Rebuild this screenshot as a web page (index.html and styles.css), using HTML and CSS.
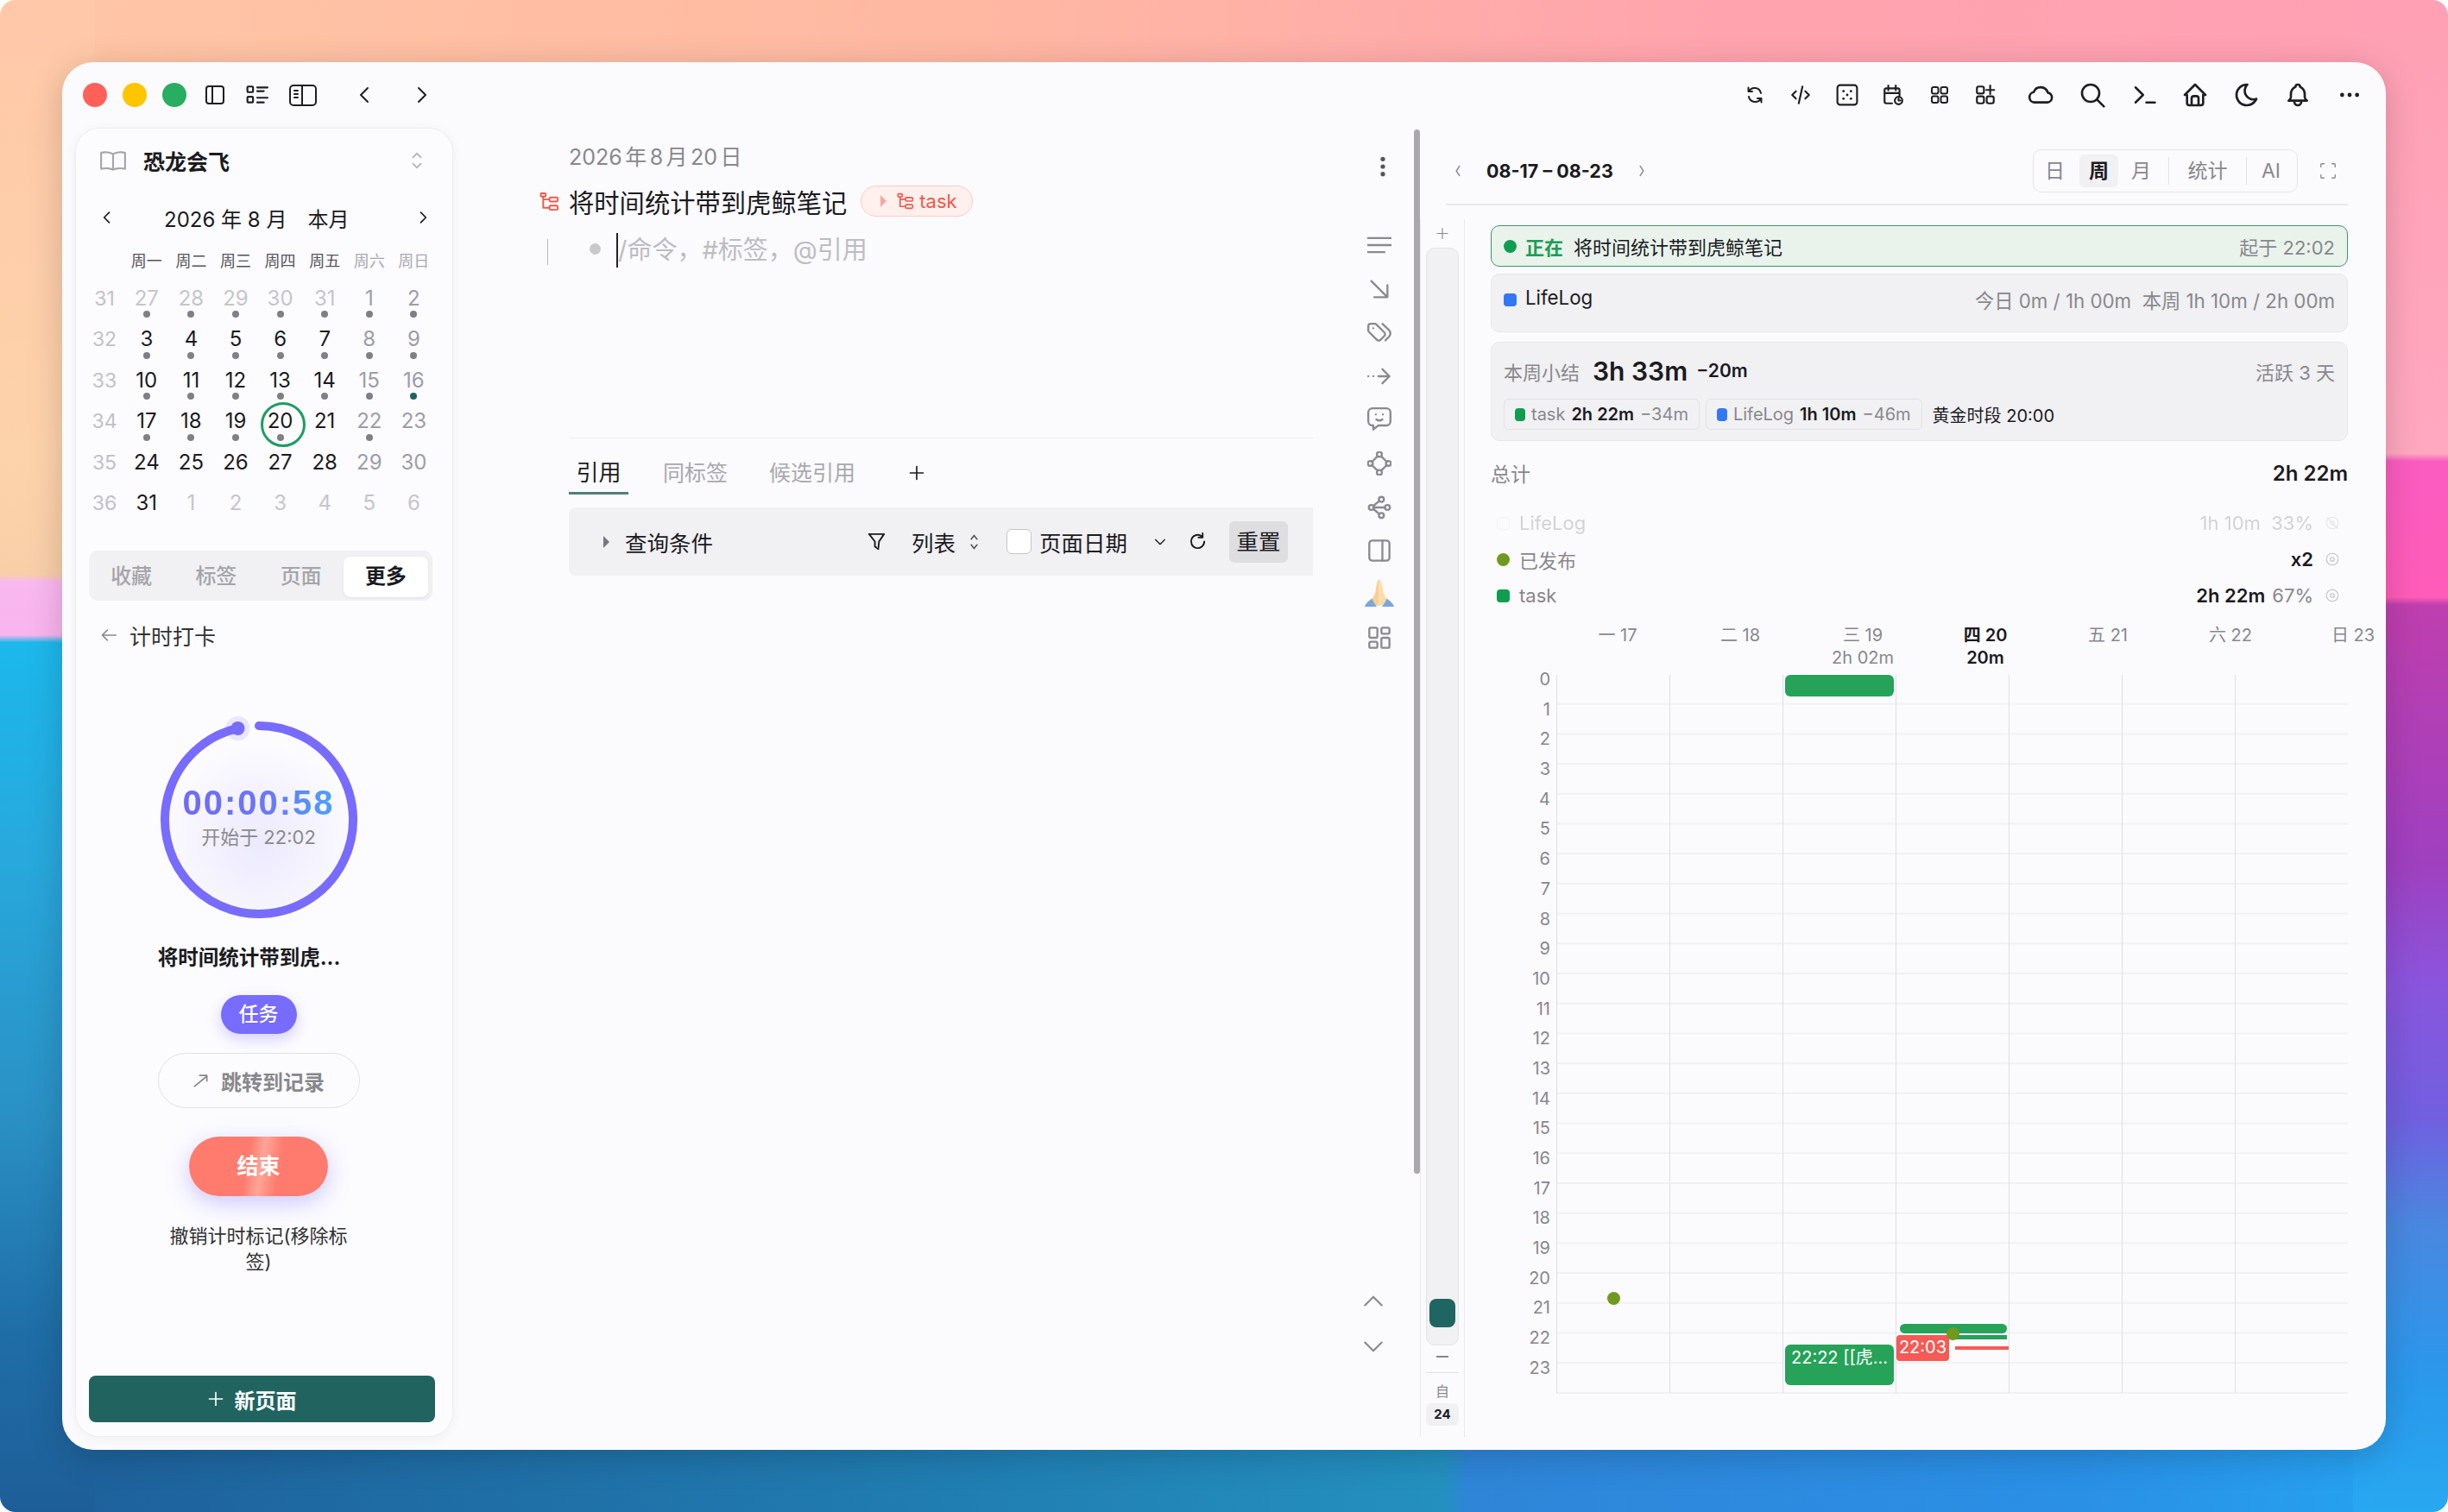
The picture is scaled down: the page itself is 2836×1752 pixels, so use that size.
FILE: index.html
```html
<!DOCTYPE html>
<html lang="zh-CN">
<head>
    <meta charset="UTF-8">
    <title>恐龙会飞</title>
    <link rel="stylesheet" href="styles.css">
</head>
<body>
<div class="window">
    <div class="titlebar">
        <div class="lights"><span class="light red"></span><span class="light yellow"></span><span class="light green"></span></div>
        <div class="left-icons">
            <svg class="ic s24" viewBox="0 0 24 24"><rect x="2" y="2" width="20" height="20" rx="3"/><path d="M9 2v20"/></svg>
            <svg class="ic s26" viewBox="0 0 24 24"><rect x="1.5" y="3" width="6" height="6" rx="1"/><rect x="1.5" y="14" width="6" height="6" rx="1"/><path d="M12 4h11M12 8h7M12 15h11M12 20h7"/></svg>
            <svg class="ic wide" viewBox="0 0 32 25"><rect x="1" y="1" width="30" height="23" rx="4"/><path d="M15 1v23M6 7h4M6 11h4M6 15h4"/></svg>
        </div>
        <div class="history">
            <svg class="ic s24" viewBox="0 0 24 24"><path d="M16 4l-8 8 8 8"/></svg>
            <svg class="ic s24" viewBox="0 0 24 24"><path d="M8 4l8 8-8 8"/></svg>
        </div>
        <div class="right-icons">
            <div class="icon-group first">
                <span class="slot"><svg class="ic s24" viewBox="0 0 24 24"><path d="M19 10a7.5 7.5 0 0 0-14-2M4.5 3.5V8H9"/><path d="M5 14a7.5 7.5 0 0 0 14 2M19.5 20.5V16H15"/></svg></span>
                <span class="slot"><svg class="ic s26" viewBox="0 0 24 24"><path d="M7 8l-4 4 4 4M17 8l4 4-4 4M14 3l-4 18"/></svg></span>
                <span class="slot"><svg class="ic s26" viewBox="0 0 24 24"><rect x="1.5" y="1.5" width="21" height="21" rx="3"/><g class="solid"><circle cx="8" cy="8" r="1.3"/><circle cx="16" cy="8" r="1.3"/><circle cx="12" cy="12" r="1.3"/><circle cx="8" cy="16" r="1.3"/><circle cx="16" cy="16" r="1.3"/></g></svg></span>
                <span class="slot"><svg class="ic s26" viewBox="0 0 24 24"><path d="M11 21H5a2 2 0 0 1-2-2V7a2 2 0 0 1 2-2h12a2 2 0 0 1 2 2v6M15 2v5M7 2v5M3 10h16"/><circle cx="18" cy="18" r="4"/><path d="M18 16v2h2"/></svg></span>
                <span class="slot"><svg class="ic s24" viewBox="0 0 24 24"><rect x="3" y="3" width="7.5" height="7.5" rx="2"/><rect x="13.5" y="3" width="7.5" height="7.5" rx="2"/><rect x="3" y="13.5" width="7.5" height="7.5" rx="2"/><rect x="13.5" y="13.5" width="7.5" height="7.5" rx="2"/></svg></span>
                <span class="slot"><svg class="ic s26" viewBox="0 0 24 24"><rect x="3" y="3" width="7.5" height="7.5" rx="2"/><rect x="3" y="13.5" width="7.5" height="7.5" rx="2"/><rect x="13.5" y="13.5" width="7.5" height="7.5" rx="2"/><path d="M17.2 2v9M13 6.7h8.5"/></svg></span>
            </div>
            <div class="icon-group second">
                <span class="slot"><svg class="ic s32" viewBox="0 0 24 24"><path d="M6.5 18.5a4.5 4.5 0 0 1-.5-8.9A6.5 6.5 0 0 1 18.3 10a4.3 4.3 0 0 1-.3 8.5z"/></svg></span>
                <span class="slot"><svg class="ic s32" viewBox="0 0 24 24"><circle cx="10.5" cy="10.5" r="7.5"/><path d="M16 16l6 6"/></svg></span>
                <span class="slot"><svg class="ic s30" viewBox="0 0 24 24"><path d="M4 5l7 7-7 7M14 19h8"/></svg></span>
                <span class="slot"><svg class="ic s32" viewBox="0 0 24 24"><path d="M5 12H3l9-9 9 9h-2M5 12v7a2 2 0 0 0 2 2h10a2 2 0 0 0 2-2v-7M9 21v-6a2 2 0 0 1 2-2h2a2 2 0 0 1 2 2v6"/></svg></span>
                <span class="slot"><svg class="ic s32" viewBox="0 0 24 24"><path d="M12 3h.4a7.5 7.5 0 0 0 7.9 12.4A9 9 0 1 1 12 3z"/></svg></span>
                <span class="slot"><svg class="ic s32" viewBox="0 0 24 24"><path d="M10 5a2 2 0 1 1 4 0 7 7 0 0 1 4 6v3a4 4 0 0 0 2 3H4a4 4 0 0 0 2-3v-3a7 7 0 0 1 4-6M9 17v1a3 3 0 0 0 6 0v-1"/></svg></span>
                <span class="slot"><svg class="s26 solid" viewBox="0 0 24 24"><circle cx="4" cy="12" r="2.2"/><circle cx="12" cy="12" r="2.2"/><circle cx="20" cy="12" r="2.2"/></svg></span>
            </div>
        </div>
    </div>

    <div class="layout">
        <aside class="sidebar">
            <div class="space-head">
                <svg class="ic book" viewBox="0 0 30 24"><path d="M15 5C12 3 6 2.5 2 3.5V21c4-1 10-.5 13 1 3-1.5 9-2 13-1V3.5C24 2.5 18 3 15 5zM15 5v17"/></svg>
                <span class="space-name">恐龙会飞</span>
                <svg class="ic updown" viewBox="0 0 14 24"><path d="M2 8l5-5 5 5M2 16l5 5 5-5"/></svg>
            </div>
            <div class="cal-head">
                <svg class="ic s20" viewBox="0 0 24 24"><path d="M15 5l-7 7 7 7"/></svg>
                <div class="cal-title"><span>2026 年 8 月</span><span>本月</span></div>
                <svg class="ic s20" viewBox="0 0 24 24"><path d="M9 5l7 7-7 7"/></svg>
            </div>
            <div class="week-row">
                <span></span><span>周一</span><span>周二</span><span>周三</span><span>周四</span><span>周五</span><span class="off">周六</span><span class="off">周日</span>
            </div>
            <div class="cal-grid">
                <span class="wk">31</span><span class="out dot">27</span><span class="out dot">28</span><span class="out dot">29</span><span class="out dot">30</span><span class="out dot">31</span><span class="rest dot">1</span><span class="rest dot">2</span>
                <span class="wk">32</span><span class="dot">3</span><span class="dot">4</span><span class="dot">5</span><span class="dot">6</span><span class="dot">7</span><span class="rest dot">8</span><span class="rest dot">9</span>
                <span class="wk">33</span><span class="dot">10</span><span class="dot">11</span><span class="dot">12</span><span class="dot">13</span><span class="dot">14</span><span class="rest dot">15</span><span class="rest dot teal">16</span>
                <span class="wk">34</span><span class="dot">17</span><span class="dot">18</span><span class="dot">19</span><span class="dot today">20</span><span>21</span><span class="rest dot">22</span><span class="rest">23</span>
                <span class="wk">35</span><span>24</span><span>25</span><span>26</span><span>27</span><span>28</span><span class="rest">29</span><span class="rest">30</span>
                <span class="wk">36</span><span>31</span><span class="out">1</span><span class="out">2</span><span class="out">3</span><span class="out">4</span><span class="out">5</span><span class="out">6</span>
            </div>
            <div class="segment">
                <span>收藏</span><span>标签</span><span>页面</span><span class="active">更多</span>
            </div>
            <div class="back-row">
                <svg class="ic s20 gray" viewBox="0 0 24 24"><path d="M22 12H3M10 5l-7 7 7 7"/></svg>
                <span>计时打卡</span>
            </div>
            <div class="timer">
                <div class="ring">
                    <svg class="ring-svg" viewBox="0 0 228 228">
                        <path class="ring-arc" d="M114 5A109 109 0 1 1 89.5 7.8"/>
                        <circle class="ring-halo" cx="89.5" cy="8" r="14"/>
                        <circle class="ring-dot" cx="89.5" cy="8" r="8"/>
                    </svg>
                    <div class="clock">00:00:58</div>
                    <div class="started">开始于 22:02</div>
                </div>
                <div class="timer-title">将时间统计带到虎...</div>
                <div class="pill">任务</div>
                <div class="jump"><svg class="ic s20" viewBox="0 0 24 24"><path d="M3 20L20 6M10 5h10v8"/></svg><span>跳转到记录</span></div>
                <div class="stop">结束</div>
                <div class="undo">撤销计时标记(移除标签)</div>
            </div>
            <div class="new-page"><svg class="ic s20" viewBox="0 0 24 24"><path d="M12 3v18M3 12h18"/></svg><span>新页面</span></div>
        </aside>

        <main class="doc-area">
            <div class="doc">
                <div class="doc-date">2026 年 8 月 20 日</div>
                <div class="doc-title">
                    <svg class="ic tree" viewBox="0 0 24 24"><rect x="1.5" y="2" width="6" height="4" rx="1"/><rect x="12" y="7" width="10" height="5" rx="1.5"/><rect x="12" y="17" width="10" height="5" rx="1.5"/><path d="M4.5 6v13.5H12M4.5 9.5H12"/></svg>
                    <span>将时间统计带到虎鲸笔记</span>
                    <span class="tag"><i class="tri"></i><svg class="ic tag-tree" viewBox="0 0 24 24"><rect x="1.5" y="2" width="6" height="4" rx="1"/><rect x="12" y="7" width="10" height="5" rx="1.5"/><rect x="12" y="17" width="10" height="5" rx="1.5"/><path d="M4.5 6v13.5H12M4.5 9.5H12"/></svg>task</span>
                </div>
                <div class="editor-line">
                    <i class="guide"></i><i class="bullet"></i>
                    <span class="placeholder">/命令，#标签，@引用</span>
                </div>
                <div class="doc-rule"></div>
                <div class="doc-tabs">
                    <span class="current">引用</span><span>同标签</span><span>候选引用</span>
                    <svg class="ic plus" viewBox="0 0 24 24"><path d="M12 3v18M3 12h18"/></svg>
                </div>
                <div class="query">
                    <i class="tri dark"></i>
                    <span class="query-name">查询条件</span>
                    <svg class="ic funnel" viewBox="0 0 24 24"><path d="M3 3h18l-6 9-1 9-4-3v-6z"/></svg>
                    <span class="query-list">列表</span>
                    <svg class="ic updown small" viewBox="0 0 14 24"><path d="M3 8l4-5 4 5M3 16l4 5 4-5"/></svg>
                    <i class="check"></i>
                    <span>页面日期</span>
                    <svg class="ic caret" viewBox="0 0 24 24"><path d="M4 8l8 8 8-8"/></svg>
                    <svg class="ic redo" viewBox="0 0 24 24"><path d="M20 12a8 8 0 1 1-3-6.3M18 2v5h-5"/></svg>
                    <span class="reset">重置</span>
                </div>
            </div>
            <div class="tools">
                <svg class="solid more" viewBox="0 0 24 24"><circle cx="12" cy="4" r="2.4"/><circle cx="12" cy="12" r="2.4"/><circle cx="12" cy="20" r="2.4"/></svg>
                <div class="tool-list">
                    <svg class="ic tool" viewBox="0 0 24 24"><path d="M0 5h24M0 12h24M0 19h17"/></svg>
                    <svg class="ic tool" viewBox="0 0 24 24"><path d="M4 4l16 16M20 8v12H7"/></svg>
                    <svg class="ic tool" viewBox="0 0 24 24"><path d="M1 6v4.2a2 2 0 0 0 .6 1.4l8 8a2.4 2.4 0 0 0 3.4 0l4-4a2.4 2.4 0 0 0 0-3.4l-8-8A2 2 0 0 0 7.2 3.6H3.4A2.4 2.4 0 0 0 1 6zM18 20l3.5-3.5a4.8 4.8 0 0 0 0-6.8L15 3.6M6 8h.01"/></svg>
                    <svg class="ic tool" viewBox="0 0 24 24"><path d="M1 12h.01M6 12h.01M11 12h11M15 5l7 7-7 7"/></svg>
                    <svg class="ic tool" viewBox="0 0 24 24"><path d="M5 1h14a4 4 0 0 1 4 4v9a4 4 0 0 1-4 4h-8l-5 4v-4H5a4 4 0 0 1-4-4V5a4 4 0 0 1 4-4zM8.5 7v.01M15.5 7v.01M9 12c2 1.5 4 1.5 6 0"/></svg>
                    <svg class="ic tool" viewBox="0 0 24 24"><circle cx="12" cy="3" r="2.5"/><circle cx="12" cy="21" r="2.5"/><circle cx="3" cy="12" r="2.5"/><circle cx="21" cy="12" r="2.5"/><path d="M10 5l-5.5 5.5M14 5l5.5 5.5M10 19l-5.5-5.5M14 19l5.5-5.5"/></svg>
                    <svg class="ic tool" viewBox="0 0 24 24"><circle cx="14" cy="4" r="2.5"/><circle cx="14" cy="20" r="2.5"/><circle cx="4" cy="12" r="2.5"/><circle cx="20" cy="12" r="2.5"/><path d="M6 10.5l6-5M6 13.5l6 5M6.5 12h11"/></svg>
                    <svg class="ic tool" viewBox="0 0 24 24"><rect x="2" y="2" width="20" height="20" rx="3"/><path d="M15 2v20"/></svg>
                    <svg class="tool hands" viewBox="0 0 34 32"><path fill="#f8cf8e" d="M16.7 0c-2 2-3.2 7-3.7 12-.5 5-2.500 9-5.500 12l4 6 5.200 1z"/><path fill="#fbdca4" d="M17.300 0c2 2 3.200 7 3.700 12 .5 5 2.500 9 5.500 12l-4 6-5.200 1z"/><path fill="#7aa6dd" d="M0 32c1-4 5-7 8.500-9.500 1 3.500 3.500 6.500 5.500 9.500zM34 32c-1-4-5-7-8.500-9.500-1 3.500-3.500 6.500-5.500 9.500z"/></svg>
                    <svg class="ic tool" viewBox="0 0 24 24"><rect x="2" y="2" width="8" height="10" rx="1.5"/><rect x="14" y="2" width="8" height="6" rx="1.5"/><rect x="2" y="16" width="8" height="6" rx="1.5"/><rect x="14" y="12" width="8" height="10" rx="1.5"/></svg>
                </div>
                <div class="tool-nav">
                    <svg class="ic s26 gray" viewBox="0 0 24 24"><path d="M3 17l9-9 9 9"/></svg>
                    <svg class="ic s26 gray" viewBox="0 0 24 24"><path d="M3 7l9 9 9-9"/></svg>
                </div>
            </div>
        </main>

        <div class="scrollbar"></div>

        <section class="panel">
            <div class="panel-head">
                <svg class="ic range-nav" viewBox="0 0 12 24"><path d="M8 6l-4 6 4 6"/></svg>
                <span class="range">08-17 – 08-23</span>
                <svg class="ic range-nav" viewBox="0 0 12 24"><path d="M4 6l4 6-4 6"/></svg>
                <div class="views">
                    <span>日</span><span class="on">周</span><span>月</span><i></i><span class="wide-view">统计</span><i></i><span class="ai">AI</span>
                </div>
                <svg class="ic full" viewBox="0 0 24 24"><path d="M7 3H4a1 1 0 0 0-1 1v3M17 3h3a1 1 0 0 1 1 1v3M7 21H4a1 1 0 0 1-1-1v-3M17 21h3a1 1 0 0 0 1-1v-3"/></svg>
            </div>
            <div class="panel-body">
                <div class="rail">
                    <svg class="ic rail-plus" viewBox="0 0 24 24"><path d="M12 4v16M4 12h16"/></svg>
                    <div class="track"><div class="thumb"></div></div>
                    <i class="rail-minus"></i>
                    <i class="rail-rule"></i>
                    <span class="rail-auto">自</span>
                    <span class="rail-hours">24</span>
                </div>
                <div class="stats">
                    <div class="card running">
                        <i class="mark round green-mark"></i><b class="now">正在</b><span>将时间统计带到虎鲸笔记</span><em>起于 22:02</em>
                    </div>
                    <div class="card goal">
                        <i class="mark blue-mark"></i><span>LifeLog</span><em>今日 0m / 1h 00m&nbsp; 本周 1h 10m / 2h 00m</em>
                    </div>
                    <div class="card summary">
                        <div class="sum-top">
                            <span class="sum-label">本周小结</span><b class="sum-total">3h 33m</b><b class="sum-diff">−20m</b><em>活跃 3 天</em>
                        </div>
                        <div class="sum-chips">
                            <span class="chip"><i class="mark green-mark"></i><u>task</u><b>2h 22m</b><u>−34m</u></span>
                            <span class="chip"><i class="mark blue-mark"></i><u>LifeLog</u><b>1h 10m</b><u>−46m</u></span>
                            <span class="golden">黄金时段 20:00</span>
                        </div>
                    </div>
                    <div class="total"><span>总计</span><b>2h 22m</b></div>
                    <div class="legend faded">
                        <i class="mark hollow"></i><span>LifeLog</span><em>1h 10m&nbsp; 33%</em>
                        <svg class="ic eye" viewBox="0 0 24 24"><circle cx="12" cy="12" r="9"/><circle cx="12" cy="12" r="3"/><path d="M4 4l16 16"/></svg>
                    </div>
                    <div class="legend">
                        <i class="mark round olive-mark"></i><span>已发布</span><b>x2</b>
                        <svg class="ic eye" viewBox="0 0 24 24"><circle cx="12" cy="12" r="9"/><circle cx="12" cy="12" r="3"/></svg>
                    </div>
                    <div class="legend">
                        <i class="mark green-mark"></i><span>task</span><b>2h 22m</b><em class="pct">67%</em>
                        <svg class="ic eye" viewBox="0 0 24 24"><circle cx="12" cy="12" r="9"/><circle cx="12" cy="12" r="3"/></svg>
                    </div>
                    <div class="days">
                        <div>一 17</div><div>二 18</div><div>三 19<br>2h 02m</div><div class="this-day">四 20<br>20m</div><div>五 21</div><div>六 22</div><div>日 23</div>
                    </div>
                    <div class="chart">
                        <div class="hours">
                            <span>0</span><span>1</span><span>2</span><span>3</span><span>4</span><span>5</span><span>6</span><span>7</span><span>8</span><span>9</span><span>10</span><span>11</span><span>12</span><span>13</span><span>14</span><span>15</span><span>16</span><span>17</span><span>18</span><span>19</span><span>20</span><span>21</span><span>22</span><span>23</span>
                        </div>
                        <div class="grid">
                            <div class="col"><i class="event-dot mon-dot"></i></div>
                            <div class="col"></div>
                            <div class="col">
                                <div class="event wed-night"></div>
                                <div class="event wed-late">22:22 [[虎...</div>
                            </div>
                            <div class="col">
                                <div class="event thu-a"></div>
                                <div class="event thu-b"></div>
                                <div class="event thu-now">22:03</div>
                                <i class="now-line"></i>
                                <i class="event-dot thu-dot"></i>
                            </div>
                            <div class="col"></div>
                            <div class="col"></div>
                            <div class="col"></div>
                        </div>
                    </div>
                </div>
            </div>
        </section>
    </div>
</div>
</body>
</html>
```

FILE: styles.css
```css
* {
    box-sizing: border-box;
}

html {
    background-color: #fff;
}

html, body {
    margin: 0;
    height: 1752px;
    overflow: hidden;
}

/* wallpaper: only the strips round the window are seen */
body {
    padding: 72px;
    font-family: Inter, "Noto Sans CJK SC", sans-serif;
    color: #1b1b1f;
    border-radius: 18px;
    background-color: #2a86d6;
    background-image:
        linear-gradient(180deg, #ffc8a8 0%, #fdd3ab 30%, #f8cfa8 38%, #f9b8f0 38.5%, #f8b4ee 42%, #1cb8ec 42.5%, #28a8dc 57%, #2a90c4 74%, #1f6ea8 88%, #1e5e98 100%),
        linear-gradient(180deg, #ffa0b4 0%, #ffa8c0 30%, #fb5cc0 30.5%, #ff5cb8 39.5%, #bf3fae 40%, #a040c0 57%, #8a55dc 65%, #7060e0 74%, #4a88e0 81%, #2a98ec 91%, #28a8f0 100%),
        linear-gradient(90deg, #ffc6a6 0%, #ffb8a2 40%, #ffa4ae 70%, #ffa0b4 100%),
        linear-gradient(90deg, #1e5f9a 0%, #207aaf 35%, #2490c0 59%, #2f85d8 60%, #2a90e6 85%, #25a5f2 100%);
    background-size: 110px 100%, 110px 100%, 100% 110px, 100% 110px;
    background-position: left, right, top, bottom;
    background-repeat: no-repeat;
}

i, em {
    font-style: normal;
}

u {
    text-decoration: none;
}

.ic {
    fill: none;
    stroke: currentColor;
    stroke-width: 2;
    stroke-linecap: round;
    stroke-linejoin: round;
    flex: none;
}

.solid {
    fill: currentColor;
    stroke: none;
}

.s20 { width: 20px; height: 20px; }
.s24 { width: 24px; height: 24px; }
.s26 { width: 26px; height: 26px; }
.s30 { width: 30px; height: 30px; }
.s32 { width: 32px; height: 32px; }
.gray { color: #8a8a8f; }

.window {
    width: 2692px;
    height: 1608px;
    border-radius: 36px;
    background-color: #fbfafd;
    overflow: hidden;
    display: flex;
    flex-direction: column;
    box-shadow: 0 8px 40px rgba(0,0,0,0.18);
}

/* title bar */
.titlebar {
    height: 76px;
    flex: none;
    display: flex;
    align-items: center;
    padding: 0 22px 0 24px;
    color: #1f1f23;
}

.lights {
    display: flex;
    gap: 18px;
}

.light {
    width: 28px;
    height: 28px;
    border-radius: 50%;
}

.red { background-color: #ff6159; }
.yellow { background-color: #ffc500; }
.green { background-color: #27ae60; }

.left-icons {
    display: flex;
    align-items: center;
    gap: 24px;
    margin-left: 21px;
}

.wide {
    width: 32px;
    height: 25px;
}

.history {
    display: flex;
    gap: 43px;
    margin-left: 43px;
}

.right-icons {
    margin-left: auto;
    display: flex;
    gap: 24px;
}

.icon-group {
    display: flex;
}

.icon-group.first { gap: 13.5px; }
.icon-group.second { gap: 19.6px; }

.slot {
    width: 40px;
    height: 40px;
    display: flex;
    align-items: center;
    justify-content: center;
}

.layout {
    flex: 1;
    min-height: 0;
    display: flex;
}

/* left card */
.sidebar {
    width: 438px;
    height: 1517px;
    margin-left: 15px;
    flex: none;
    display: flex;
    flex-direction: column;
    border-radius: 28px;
    background-color: #fcfbfe;
    border: 1px solid #eeedf0;
    box-shadow: 0 2px 14px rgba(0,0,0,0.05);
}

.space-head {
    height: 73px;
    flex: none;
    display: flex;
    align-items: center;
    padding: 0 34px 0 27px;
}

.book {
    width: 32px;
    height: 26px;
    color: #a5a5aa;
}

.space-name {
    margin-left: 19px;
    font-size: 25px;
    font-weight: 700;
}

.updown {
    width: 14px;
    height: 22px;
    margin-left: auto;
    color: #b5b5ba;
}

.cal-head {
    height: 62px;
    flex: none;
    display: flex;
    align-items: center;
    padding: 0 24px 2px 26px;
    color: #1b1b1f;
}

.cal-title {
    display: flex;
    gap: 24px;
    margin-left: 56px;
    margin-right: auto;
    font-size: 24px;
    white-space: nowrap;
}

.week-row, .cal-grid {
    display: grid;
    grid-template-columns: 46px repeat(7, 51.6px);
    margin-left: 10px;
    text-align: center;
}

.week-row {
    height: 34px;
    margin-top: 2px;
    line-height: 34px;
    font-size: 18px;
    color: #55555a;
}

.week-row .off {
    color: #a9a9b2;
}

.cal-grid {
    margin-top: 4px;
    grid-auto-rows: 47.4px;
    font-size: 24px;
    line-height: 47.4px;
}

.cal-grid span {
    position: relative;
    line-height: 44px;
}

.cal-grid .wk { color: #c2c2c6; font-size: 23px; }
.cal-grid .out { color: #c6c6ca; }
.cal-grid .rest { color: #9d9da8; }

.cal-grid .dot::after {
    content: "";
    position: absolute;
    left: 50%;
    bottom: 3px;
    width: 8px;
    height: 8px;
    margin-left: -4px;
    border-radius: 50%;
    background-color: #7f7f85;
}

.cal-grid .teal::after {
    background-color: #21645f;
}

.cal-grid .today::before {
    content: "";
    position: absolute;
    left: 50%;
    top: 0;
    width: 46px;
    height: 46px;
    margin-left: -23px;
    border: 3px solid #1f9d63;
    border-radius: 50%;
}

.segment {
    margin: 30px 23px 0 15px;
    height: 58px;
    flex: none;
    display: grid;
    grid-template-columns: repeat(4, 1fr);
    padding: 7px 5px 4px 0;
    background-color: #f1f0f3;
    border-radius: 10px;
    font-size: 24px;
    font-weight: 500;
    color: #a5a5aa;
    text-align: center;
}

.segment span {
    line-height: 46px;
}

.segment .active {
    background-color: #fff;
    color: #1b1b1f;
    border-radius: 8px;
    font-weight: 700;
    box-shadow: 0 1px 3px rgba(0,0,0,0.08);
}

.back-row {
    height: 80px;
    flex: none;
    display: flex;
    align-items: center;
    gap: 14px;
    padding-left: 28px;
    font-size: 25px;
    color: #333;
}

.timer {
    width: 423px;
    margin-top: 60px;
    display: flex;
    flex-direction: column;
    align-items: center;
}

.ring {
    position: relative;
    width: 228px;
    height: 228px;
    padding-top: 69px;
    border-radius: 50%;
    text-align: center;
    background: radial-gradient(circle at 50% 62%, rgba(118,108,255,0.12), rgba(118,108,255,0) 65%);
}

.ring-svg {
    position: absolute;
    left: 0;
    top: 0;
    width: 228px;
    height: 228px;
    overflow: visible;
}

.ring-arc {
    fill: none;
    stroke: #776cff;
    stroke-width: 10;
    stroke-linecap: round;
}

.ring-dot { fill: #776cff; }
.ring-halo { fill: rgba(118,108,255,0.14); }

.clock {
    font-family: "Liberation Sans", sans-serif;
    font-size: 40px;
    line-height: 50px;
    font-weight: 700;
    letter-spacing: 2px;
    color: transparent;
    background: linear-gradient(90deg, #6f67f5 0%, #6a78f6 55%, #3fb0f7 100%);
    -webkit-background-clip: text;
    background-clip: text;
}

.started {
    font-size: 22px;
    line-height: 30px;
    color: #8a8a8e;
}

.timer-title {
    margin: 29px 22px 0 0;
    font-size: 23.5px;
    line-height: 34px;
    font-weight: 700;
    white-space: nowrap;
}

.pill {
    margin-top: 26px;
    width: 88px;
    height: 45px;
    line-height: 45px;
    text-align: center;
    border-radius: 23px;
    background-color: #776cff;
    color: #fff;
    font-size: 23px;
    font-weight: 500;
    box-shadow: 0 6px 16px rgba(118,108,255,0.3);
}

.jump {
    margin-top: 22px;
    width: 234px;
    height: 64px;
    display: flex;
    align-items: center;
    justify-content: center;
    gap: 13px;
    border: 1px solid #e2e1e5;
    border-radius: 32px;
    color: #88888c;
    font-size: 24px;
    font-weight: 700;
}

.stop {
    margin-top: 33px;
    width: 161px;
    height: 69px;
    line-height: 69px;
    text-align: center;
    border-radius: 35px;
    color: #fff;
    font-size: 25px;
    font-weight: 700;
    background: linear-gradient(100deg, #ff7b6e 0%, #ff7b6e 42%, #ffa598 52%, #ff7b6e 64%, #ff7b6e 100%);
    box-shadow: 0 8px 26px rgba(118,108,255,0.35);
}

.undo {
    margin-top: 31px;
    width: 214px;
    text-align: center;
    font-size: 22px;
    line-height: 30px;
    color: #333;
}

.new-page {
    margin: auto 20px 16px 15px;
    height: 54px;
    flex: none;
    display: flex;
    align-items: center;
    justify-content: center;
    gap: 12px;
    padding-right: 24px;
    border-radius: 8px;
    background-color: #21645f;
    color: #fff;
    font-size: 24px;
    font-weight: 700;
}

/* document */
.doc-area {
    width: 1113px;
    flex: none;
    display: flex;
}

.doc {
    width: 996px;
    padding-left: 134px;
    flex: none;
}

.doc-date {
    margin-top: 18px;
    height: 32px;
    line-height: 32px;
    font-size: 25px;
    word-spacing: -3.6px;
    color: #88888c;
}

.doc-title {
    position: relative;
    margin-top: 17px;
    height: 36px;
    display: flex;
    align-items: center;
    font-size: 29.3px;
    white-space: nowrap;
}

.tree {
    position: absolute;
    left: -34px;
    top: 7px;
    width: 23px;
    height: 23px;
    color: #ef5a4a;
}

.tag {
    margin-left: 16px;
    height: 36px;
    width: 130px;
    display: flex;
    align-items: center;
    padding-left: 22px;
    border: 1px solid #ffcbc4;
    border-radius: 18px;
    background-color: #ffefed;
    color: #ef5a4a;
    font-size: 22px;
}

.tri {
    width: 0;
    height: 0;
    border-left: 7px solid #f5aaa1;
    border-top: 7px solid transparent;
    border-bottom: 7px solid transparent;
}

.tag-tree {
    width: 20px;
    height: 20px;
    margin: 0 6px 0 12px;
}

.editor-line {
    position: relative;
    height: 44px;
    margin-top: 17px;
    padding-left: 55px;
    line-height: 44px;
    font-size: 29px;
    color: #bdbdc1;
}

.placeholder {
    border-left: 2px solid #222;
    display: inline-block;
    height: 40px;
    line-height: 40px;
    white-space: nowrap;
}

.guide {
    position: absolute;
    left: -25px;
    top: 9px;
    width: 1px;
    height: 30px;
    background-color: #b9b9bd;
}

.bullet {
    position: absolute;
    left: 24px;
    top: 14px;
    width: 13px;
    height: 13px;
    border-radius: 50%;
    background-color: #c9c9cc;
}

.doc-rule {
    margin-top: 195px;
    height: 1px;
    border-top: 1px solid #ececef;
}

.doc-tabs {
    height: 65px;
    padding-top: 18px;
    display: flex;
    align-items: flex-start;
    gap: 48px;
    font-size: 25px;
    line-height: 44px;
    color: #a9a9ad;
}

.doc-tabs .current {
    width: 69px;
    height: 47px;
    text-align: center;
    margin-right: -8px;
    color: #1b1b1f;
    font-size: 26px;
    border-bottom: 3px solid #4f7f76;
}

.plus {
    width: 20px;
    height: 20px;
    margin: 12px 0 0 13px;
    color: #1b1b1f;
}

.query {
    margin-top: 15px;
    height: 79px;
    display: flex;
    align-items: center;
    padding: 0 29px 0 40px;
    background-color: #f1f0f3;
    border-radius: 8px 0 0 8px;
    font-size: 25.5px;
    color: #1b1b1f;
}

.tri.dark {
    border-left-color: #77777c;
}

.query-name {
    margin-left: 18px;
}

.funnel {
    width: 23px;
    height: 23px;
    margin-left: auto;
}

.query-list {
    margin-left: 29px;
}

.updown.small {
    width: 13px;
    height: 20px;
    margin-left: 15px;
    color: #55555a;
}

.check {
    width: 29px;
    height: 29px;
    margin: 0 9px 0 31px;
    border: 1px solid #c5c5c9;
    border-radius: 6px;
    background-color: #fff;
}

.caret {
    width: 16px;
    height: 16px;
    margin-left: 30px;
}

.redo {
    width: 23px;
    height: 23px;
    margin-left: 24px;
}

.reset {
    width: 68px;
    height: 48px;
    line-height: 48px;
    margin-left: 25px;
    text-align: center;
    border-radius: 6px;
    background-color: #dedde0;
}

.tools {
    width: 117px;
    flex: none;
    position: relative;
    display: flex;
    flex-direction: column;
    align-items: center;
    padding: 32px 20px 0 57px;
    color: #8a8a8f;
}

.more {
    width: 26px;
    height: 26px;
    flex: none;
    margin-left: 8px;
    fill: #55555a;
}

.tool-list {
    margin-top: 64px;
    display: flex;
    flex-direction: column;
    align-items: center;
    gap: 22.6px;
}

.tool {
    width: 28px;
    height: 28px;
    display: block;
}

.hands {
    width: 34px;
    height: 32px;
    margin: -4px 0 0;
}

.tool-nav {
    position: absolute;
    left: 57px;
    top: 1346px;
    display: flex;
    flex-direction: column;
    gap: 28px;
}

.scrollbar {
    width: 7px;
    height: 1210px;
    margin-top: 2px;
    flex: none;
    border-radius: 4px;
    background-color: #aaa8ac;
}

/* right panel */
.panel {
    flex: 1;
    min-width: 0;
    display: flex;
    flex-direction: column;
}

.panel-head {
    height: 90px;
    flex: none;
    margin: 0 44px 0 30px;
    padding: 12px 0 0 8px;
    display: flex;
    align-items: center;
    border-bottom: 2px solid #e9e8ec;
    color: #8a8a8f;
}

.range-nav {
    width: 12px;
    height: 22px;
    stroke-width: 1.5;
}

.range {
    margin: 0 27px;
    font-size: 21.5px;
    font-weight: 700;
    color: #1b1b1f;
    white-space: nowrap;
}

.views {
    margin-left: auto;
    width: 307px;
    height: 50px;
    display: flex;
    align-items: center;
    border: 1px solid #e5e5e8;
    border-radius: 10px;
    font-size: 23px;
    color: #88888c;
}

.views span {
    width: 49px;
    height: 38px;
    line-height: 38px;
    text-align: center;
    border-radius: 6px;
    flex: none;
}

.views .on {
    width: 45px;
    margin: 0 2px 0 4px;
    background-color: #f1f0f3;
    color: #1b1b1f;
    font-weight: 700;
}

.views .wide-view {
    width: 89px;
}

.views .ai {
    width: 56px;
}

.views i {
    width: 1px;
    height: 32px;
    flex: none;
    background-color: #e2e1e5;
}

.views i:nth-of-type(1) {
    margin-left: 7px;
}

.full {
    width: 22px;
    height: 22px;
    margin: 0 12px 0 24px;
    color: #8a8a8f;
    stroke-width: 1.5;
}

.panel-body {
    flex: 1;
    min-height: 0;
    display: flex;
}

.rail {
    width: 52px;
    height: 1411px;
    margin-top: 16px;
    flex: none;
    display: flex;
    flex-direction: column;
    align-items: center;
    border-left: 1px solid #e9e8ec;
    border-right: 1px solid #e9e8ec;
    color: #88888c;
}

.rail-plus {
    width: 18px;
    height: 33px;
    stroke-width: 1.5;
    flex: none;
}

.track {
    width: 38px;
    height: 1272px;
    flex: none;
    display: flex;
    flex-direction: column;
    justify-content: flex-end;
    align-items: center;
    padding-bottom: 20px;
    border: 1px solid #e5e5e8;
    border-radius: 10px;
    background-color: #f1f0f3;
}

.thumb {
    width: 30px;
    height: 33px;
    border-radius: 8px;
    background-color: #1f6561;
}

.rail-minus {
    width: 14px;
    height: 2px;
    margin-top: 12px;
    background-color: #88888c;
}

.rail-rule {
    width: 38px;
    height: 1px;
    margin-top: 17px;
    background-color: #e2e1e5;
}

.rail-auto {
    margin-top: 10px;
    font-size: 16px;
    line-height: 22px;
}

.rail-hours {
    width: 38px;
    height: 26px;
    margin-top: 3px;
    line-height: 26px;
    text-align: center;
    border-radius: 6px;
    background-color: #f1f0f3;
    font-size: 15px;
    font-weight: 700;
    color: #1b1b1f;
}

.stats {
    flex: 1;
    min-width: 0;
    padding: 23px 44px 0 30px;
}

.card {
    display: flex;
    border-radius: 10px;
    border: 1px solid #e8e7ea;
    background-color: #f1f0f3;
    font-size: 22px;
}

.card em {
    margin-left: auto;
    color: #88888c;
}

.mark {
    width: 15px;
    height: 15px;
    flex: none;
    border-radius: 4px;
    display: inline-block;
}

.round { border-radius: 50%; }
.green-mark { background-color: #0f9d4f; }
.blue-mark { background-color: #3477f5; }
.olive-mark { background-color: #6f9a1f; }
.hollow { border: 1px solid #e5e5e8; }

.running {
    height: 48px;
    align-items: center;
    padding: 0 14px;
    border-color: #3f9467;
    background-color: #e9f3ec;
}

.now {
    margin: 0 12px 0 10px;
    color: #1e9d57;
    font-weight: 700;
}

.goal {
    margin-top: 8px;
    height: 68px;
    padding: 13px 14px 0;
    align-items: flex-start;
    font-size: 22.3px;
}

.goal .mark {
    margin: 9px 10px 0 0;
}

.summary {
    margin-top: 11px;
    height: 115px;
    padding: 0 14px;
    flex-direction: column;
}

.sum-top {
    height: 65px;
    display: flex;
    align-items: center;
}

.sum-label { color: #88888c; }

.sum-total {
    margin-left: 15px;
    font-size: 30px;
    font-weight: 600;
}

.sum-diff {
    margin-left: 10px;
    font-size: 21px;
    font-weight: 600;
}

.sum-chips {
    display: flex;
    align-items: center;
    font-size: 20px;
}

.chip {
    height: 36px;
    display: flex;
    align-items: center;
    gap: 7px;
    margin-right: 7px;
    padding: 0 12px;
    border: 1px solid #e2e1e5;
    border-radius: 6px;
}

.chip .mark {
    width: 12px;
    height: 15px;
}

.chip u { color: #88888c; }
.chip b { font-weight: 600; }

.golden {
    margin-left: 5px;
}

.total {
    margin-top: 22px;
    height: 30px;
    display: flex;
    justify-content: space-between;
    align-items: center;
    font-size: 23px;
    color: #88888c;
}

.total b {
    color: #1b1b1f;
    font-size: 24px;
    font-weight: 600;
}

.legend {
    height: 42px;
    display: flex;
    align-items: center;
    padding: 0 9px 0 7px;
    font-size: 22px;
    color: #88888c;
}

.total + .legend {
    margin-top: 22px;
}

.legend span {
    margin-left: 11px;
}

.legend b {
    margin-left: auto;
    color: #1b1b1f;
    font-weight: 600;
}

.legend em {
    margin-left: auto;
}

.legend .pct {
    margin-left: 8px;
}

.eye {
    width: 18px;
    height: 18px;
    margin-left: 13px;
    color: #c0c0c5;
    stroke-width: 1.5;
}

.legend.faded {
    opacity: 0.35;
}

.days {
    margin: 11px 0 0 76px;
    height: 60px;
    display: flex;
    font-size: 20px;
    line-height: 26px;
    color: #88888c;
}

.days div {
    width: 142px;
    flex: none;
    padding-top: 1px;
    text-align: center;
}

.days .this-day {
    color: #1b1b1f;
    font-weight: 600;
}

.chart {
    display: flex;
}

.hours {
    width: 76px;
    flex: none;
    padding-right: 7px;
    display: flex;
    flex-direction: column;
    text-align: right;
    font-size: 20px;
    color: #88888c;
}

.hours span {
    height: 34.7px;
    line-height: 10px;
}

.grid {
    flex: 1;
    height: 833px;
    display: flex;
    background-image: linear-gradient(to top, #f1f0f3 2px, transparent 2px);
    background-size: 100% 34.708px;
    border-bottom: 1px solid #efeef1;
}

.col {
    flex: 1;
    position: relative;
    border-left: 1px solid #dfdee2;
}

.event {
    position: absolute;
    border-radius: 6px;
    background-color: #26a259;
    color: #fff;
    font-size: 20px;
}

.wed-night {
    left: 2px;
    right: 2px;
    top: 0;
    height: 25px;
}

.wed-late {
    left: 2px;
    right: 2px;
    top: 776px;
    height: 47px;
    padding: 2px 0 0 7px;
    line-height: 26px;
    white-space: nowrap;
}

.thu-a {
    left: 4px;
    right: 2px;
    top: 752px;
    height: 11px;
}

.thu-b {
    left: 4px;
    right: 2px;
    top: 765px;
    height: 5px;
    border-radius: 0;
}

.thu-now {
    left: 0;
    top: 765px;
    width: 61px;
    height: 30px;
    line-height: 28px;
    text-align: center;
    background-color: #f55a55;
    border-radius: 4px;
}

.now-line {
    position: absolute;
    left: 68px;
    right: 0;
    top: 778px;
    height: 4px;
    background-color: #f55a55;
}

.event-dot {
    position: absolute;
    width: 15px;
    height: 15px;
    border-radius: 50%;
    background-color: #6f9a1f;
}

.mon-dot {
    left: 58px;
    top: 715px;
}

.thu-dot {
    left: 58px;
    top: 756px;
}
```
